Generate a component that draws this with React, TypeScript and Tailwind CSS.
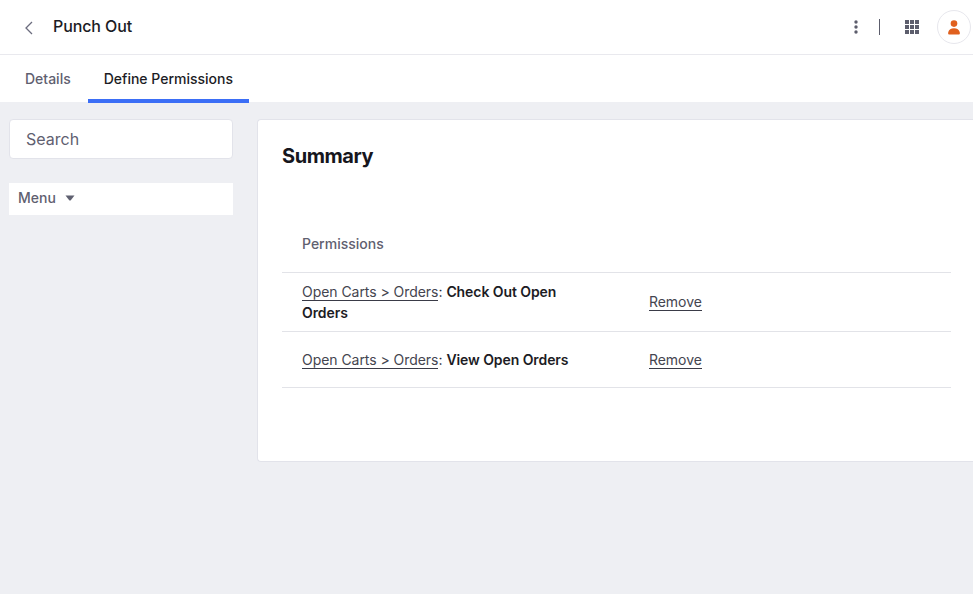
export default function App() {
  const row = "flex items-center border-b border-[#e2e3e8]";
  const link = "border-b border-[#3a3b47] text-[#44454f] tracking-[-0.05px]";
  const strong = "font-semibold text-[#1c1c24] tracking-[-0.08px]";
  return (
    <div className="h-[594px] w-[973px] overflow-hidden bg-[#eeeff3] font-['Inter',sans-serif] text-[#272833]">
      <header className="flex h-[55px] items-center border-b border-[#e9e9ee] bg-white pl-[23px] pr-[2px]">
        <svg width="12" height="16" viewBox="0 0 12 16" fill="none" stroke="#6b6c7e" strokeWidth="1.3" className="mt-[2px]">
          <path d="M9 2 L3 8 L9 14" />
        </svg>
        <h1 className="ml-[18px] mb-[2px] text-[16px] font-medium leading-6 tracking-[-0.1px] text-[#1c1c24]">Punch Out</h1>
        <div className="ml-auto flex items-center">
          <svg width="4" height="14" viewBox="0 0 4 14" fill="#5c5d6c" className="mr-[-1px]">
            <circle cx="2" cy="2" r="1.7" />
            <circle cx="2" cy="7" r="1.7" />
            <circle cx="2" cy="12" r="1.7" />
          </svg>
          <div className="ml-[22px] h-4 w-px bg-[#5c5d6c]" />
          <svg width="14" height="14" viewBox="0 0 14 14" fill="#5c5d6c" className="ml-[25px]">
            <rect x="0" y="0" width="4" height="4" /><rect x="5" y="0" width="4" height="4" /><rect x="10" y="0" width="4" height="4" />
            <rect x="0" y="5" width="4" height="4" /><rect x="5" y="5" width="4" height="4" /><rect x="10" y="5" width="4" height="4" />
            <rect x="0" y="10" width="4" height="4" /><rect x="5" y="10" width="4" height="4" /><rect x="10" y="10" width="4" height="4" />
          </svg>
          <div className="ml-[18px] flex h-[34px] w-[34px] items-center justify-center rounded-full border border-[#e7e7ed] bg-white">
            <svg width="12" height="15" viewBox="0 0 12 15" fill="#e0601e">
              <circle cx="6" cy="3.6" r="3.3" />
              <path d="M1 14.5 C0 14.5 0 13.4 0.3 12 C0.8 9.6 3 8.2 6 8.2 C9 8.2 11.2 9.6 11.7 12 C12 13.4 12 14.5 11 14.5 Z" />
            </svg>
          </div>
        </div>
      </header>
      <nav className="flex h-[47px] items-stretch bg-white pl-[9px] text-[14px] font-medium">
        <div className="flex items-center px-4 pb-[1px] text-[#5f6070]">Details</div>
        <div className="relative z-10 mb-[-1px] ml-px flex items-center border-b-[4px] border-[#3b6ef6] px-4 pt-[2px] text-[#1c1c24]">Define Permissions</div>
      </nav>
      <div className="flex items-start gap-6 pl-[9px] pt-[17px]">
        <aside className="w-[224px] shrink-0">
          <div className="flex h-10 items-center rounded-[4px] border border-[#e2e3ea] bg-white pl-4 text-[16px] text-[#5f6070]">Search</div>
          <div className="mt-6 flex h-8 items-center bg-white pb-[4px] pl-[9px] text-[14px] font-medium text-[#5f6070]">
            Menu
            <svg width="10" height="6" viewBox="0 0 10 6" fill="#5f6070" className="ml-[9px] mt-[2px]">
              <path d="M0.5 0.5 H9.5 L6 5 Q5 6 4 5 Z" />
            </svg>
          </div>
        </aside>
        <main className="h-[343px] flex-1 rounded-l-[4px] border border-r-0 border-[#e2e3ea] bg-white pl-6 pr-[22px]">
          <h2 className="mt-[24px] text-[20px] font-bold leading-6 tracking-[-0.45px] text-[#16161d]">Summary</h2>
          <div className="mt-[36px] flex h-[69px] items-center border-b border-[#e2e3e8] pl-5 pt-[10px] text-[14px] font-medium text-[#5f6070]">Permissions</div>
          <div className={`${row} h-[59px] pl-5 text-[14px] leading-[21px]`}>
            <div className="w-[347px] pr-[70px]">
              <span className={link}>Open Carts &gt; Orders</span>: <b className={strong}>Check Out Open Orders</b>
            </div>
            <span className={link + " leading-[17px]"}>Remove</span>
          </div>
          <div className={`${row} h-[56px] pl-5 text-[14px]`}>
            <div className="w-[347px]">
              <span className={link}>Open Carts &gt; Orders</span>: <b className={strong}>View Open Orders</b>
            </div>
            <span className={link + " leading-[17px]"}>Remove</span>
          </div>
        </main>
      </div>
    </div>
  );
}
